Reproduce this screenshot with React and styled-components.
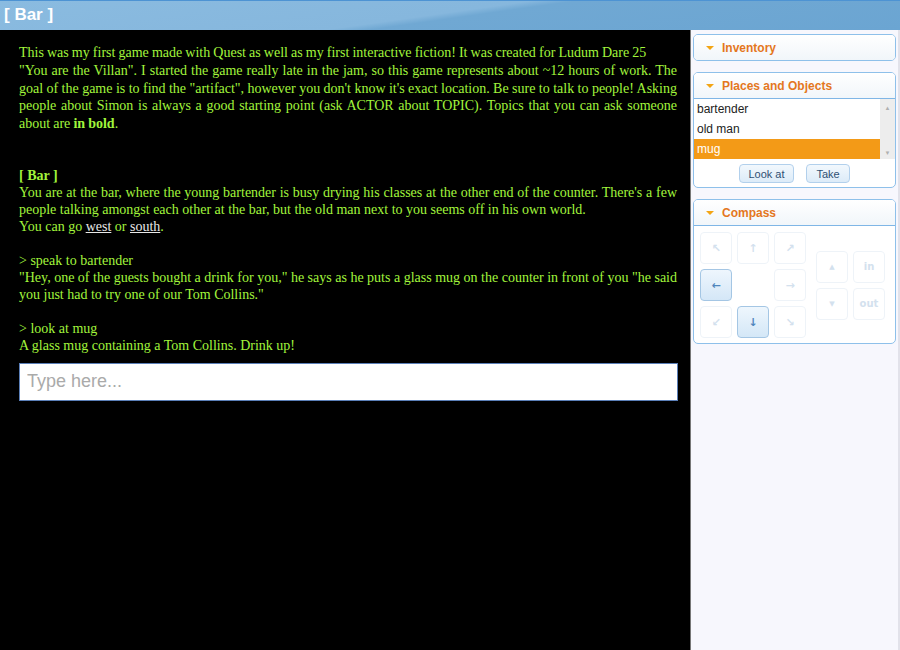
import styled, { createGlobalStyle } from "styled-components";

const Global = createGlobalStyle`
    html, body {
        margin: 0;
        padding: 0;
        background: #000;
    }
    * {
        box-sizing: border-box;
    }
`;

const places = ["bartender", "old man", "mug"];

const compassMain = [
    { glyph: "↖" }, { glyph: "↑" }, { glyph: "↗" },
    { glyph: "←", on: true }, null, { glyph: "→" },
    { glyph: "↙" }, { glyph: "↓", on: true }, { glyph: "↘" },
];

const compassSide = [
    { glyph: "▲", small: true }, { glyph: "in", word: true },
    { glyph: "▼", small: true }, { glyph: "out", word: true },
];

function Panel({ title, children }) {
    return (
        <PanelBox>
            <PanelHead $open={!!children}>
                <Caret />
                <span>{title}</span>
            </PanelHead>
            {children}
        </PanelBox>
    );
}

export default function App() {
    return (
        <Page>
            <Global />
            <TitleBar>[ Bar ]</TitleBar>
            <Body>
                <Story>
                    <Para $lh="17.75px" $tight>
                        This was my first game made with Quest as well as my first interactive fiction! It was created for Ludum Dare 25
                        <br />
                        "You are the Villan". I started the game really late in the jam, so this game represents about ~12 hours of work. The goal of the game is to find the "artifact", however you don't know it's exact location. Be sure to talk to people! Asking people about Simon is always a good starting point (ask ACTOR about TOPIC). Topics that you can ask someone about are <b>in bold</b>.
                    </Para>
                    <Blank $lines={2} />
                    <Para>
                        <b>[ Bar ]</b>
                        <br />
                        You are at the bar, where the young bartender is busy drying his classes at the other end of the counter. There's a few people talking amongst each other at the bar, but the old man next to you seems off in his own world.
                        <br />
                        You can go <Exit>west</Exit> or <Exit>south</Exit>.
                    </Para>
                    <Blank $lines={1} />
                    <Para>
                        &gt; speak to bartender
                        <br />
                        "Hey, one of the guests bought a drink for you," he says as he puts a glass mug on the counter in front of you "he said you just had to try one of our Tom Collins."
                    </Para>
                    <Blank $lines={1} />
                    <Para>
                        &gt; look at mug
                        <br />
                        A glass mug containing a Tom Collins. Drink up!
                    </Para>
                    <Command placeholder="Type here..." />
                </Story>
                <Sidebar>
                    <Panel title="Inventory" />
                    <Panel title="Places and Objects">
                        <ListWrap>
                            <List>
                                {places.map((p) => (
                                    <Item key={p} $selected={p === "mug"}>{p}</Item>
                                ))}
                            </List>
                            <Scroll>
                                <span>▲</span>
                                <span>▼</span>
                            </Scroll>
                        </ListWrap>
                        <Actions>
                            <ActionButton $w="55px">Look at</ActionButton>
                            <ActionButton $w="44px">Take</ActionButton>
                        </Actions>
                    </Panel>
                    <Panel title="Compass">
                        <CompassArea>
                            <CompassGrid>
                                {compassMain.map((c, i) =>
                                    c ? (
                                        <DirButton key={i} $on={c.on}>{c.glyph}</DirButton>
                                    ) : (
                                        <span key={i} />
                                    )
                                )}
                            </CompassGrid>
                            <CompassGrid $cols={2}>
                                {compassSide.map((c, i) => (
                                    <DirButton key={i} $small={c.small} $word={c.word}>{c.glyph}</DirButton>
                                ))}
                            </CompassGrid>
                        </CompassArea>
                    </Panel>
                </Sidebar>
            </Body>
        </Page>
    );
}

const Page = styled.div`
    width: 900px;
    height: 650px;
    display: flex;
    flex-direction: column;
    overflow: hidden;
`;

const TitleBar = styled.div`
    height: 30px;
    flex-shrink: 0;
    padding: 3px 0 0 4px;
    border-top: 1px solid #4d93d3;
    background: linear-gradient(172deg, #8abbe0 0%, #86b7dd 48%, #70a8d3 52%, #6ba5d2 100%);
    color: #fff;
    font-family: "Liberation Sans", Arial, sans-serif;
    font-weight: 700;
    font-size: 17px;
    line-height: 22px;
`;

const Body = styled.div`
    flex: 1;
    display: flex;
    min-height: 0;
`;

const Story = styled.div`
    width: 690px;
    background: #000;
    padding: 14px 13px 0 19px;
    color: #a2f53c;
    font-family: "Liberation Serif", "Times New Roman", serif;
    font-size: 14px;
    line-height: 17px;
    text-align: justify;
    b {
        font-weight: 700;
    }
`;

const Para = styled.p`
    margin: 0;
    line-height: ${(p) => p.$lh || "17px"};
    word-spacing: ${(p) => (p.$tight ? "-0.4px" : "normal")};
`;

const Blank = styled.div`
    height: ${(p) => p.$lines * 17}px;
`;

const Exit = styled.span`
    color: #e8e8e8;
    text-decoration: underline;
`;

const Command = styled.input`
    display: block;
    width: 659px;
    height: 38px;
    margin-top: 9px;
    padding: 0 7px;
    border: 1px solid #5b7fb8;
    background: #fff;
    font-family: "Liberation Sans", Arial, sans-serif;
    font-size: 18px;
    outline: none;
    &::placeholder {
        color: #aaa;
    }
`;

const Sidebar = styled.div`
    width: 210px;
    background: #f7f7fd;
    border-left: 1px solid #777;
    border-right: 2px solid #e2e2ea;
    padding: 4px 2px 0 2px;
    display: flex;
    flex-direction: column;
    gap: 11px;
`;

const PanelBox = styled.div`
    border: 1px solid #8ec0ea;
    border-radius: 5px;
    background: #fff;
    overflow: hidden;
`;

const PanelHead = styled.div`
    height: ${(p) => (p.$open ? "26px" : "25px")};
    display: flex;
    align-items: center;
    gap: 8px;
    padding-left: 12px;
    background: linear-gradient(#ffffff, #f1f6fa);
    border-bottom: ${(p) => (p.$open ? "1px solid #7fb6e6" : "none")};
    color: #e4771e;
    font-family: "Liberation Sans", Arial, sans-serif;
    font-size: 12px;
    font-weight: 700;
`;

const Caret = styled.i`
    width: 0;
    height: 0;
    border-left: 4px solid transparent;
    border-right: 4px solid transparent;
    border-top: 4px solid #f3a514;
`;

const ListWrap = styled.div`
    display: flex;
    height: 60px;
`;

const List = styled.div`
    flex: 1;
`;

const Item = styled.div`
    height: 20px;
    line-height: 20px;
    padding-left: 3px;
    font-family: "Liberation Sans", Arial, sans-serif;
    font-size: 12px;
    color: ${(p) => (p.$selected ? "#fff" : "#222")};
    background: ${(p) => (p.$selected ? "#f39a17" : "transparent")};
`;

const Scroll = styled.div`
    width: 15px;
    background: #ededed;
    display: flex;
    flex-direction: column;
    justify-content: space-between;
    align-items: center;
    padding: 4px 0 1px;
    color: #b0b0b0;
    font-size: 6px;
    line-height: 10px;
`;

const Actions = styled.div`
    display: flex;
    justify-content: center;
    gap: 12px;
    padding: 5px 0 4px;
`;

const ActionButton = styled.button`
    width: ${(p) => p.$w};
    height: 19px;
    padding: 0;
    white-space: nowrap;
    border: 1px solid #b2d0ec;
    border-radius: 4px;
    background: linear-gradient(#f2f8fd, #dcebf8);
    color: #2f4f73;
    font-family: "Liberation Sans", Arial, sans-serif;
    font-size: 11px;
`;

const CompassArea = styled.div`
    display: flex;
    align-items: center;
    gap: 10px;
    padding: 6px 0 5px 6px;
`;

const CompassGrid = styled.div`
    display: grid;
    grid-template-columns: repeat(${(p) => p.$cols || 3}, 32px);
    grid-auto-rows: 32px;
    gap: 5px;
`;

const DirButton = styled.div`
    display: flex;
    align-items: center;
    justify-content: center;
    border-radius: 4px;
    border: 1px solid ${(p) => (p.$on ? "#a4c6e4" : "#eef3f8")};
    background: ${(p) => (p.$on ? "linear-gradient(#eef6fd, #d4e7f7)" : "#fff")};
    color: ${(p) => (p.$on ? "#4f86bd" : "#d3e1ee")};
    font-family: "DejaVu Sans", sans-serif;
    font-size: ${(p) => (p.$small ? "7px" : p.$word ? "10px" : "11px")};
    font-weight: 700;
`;
